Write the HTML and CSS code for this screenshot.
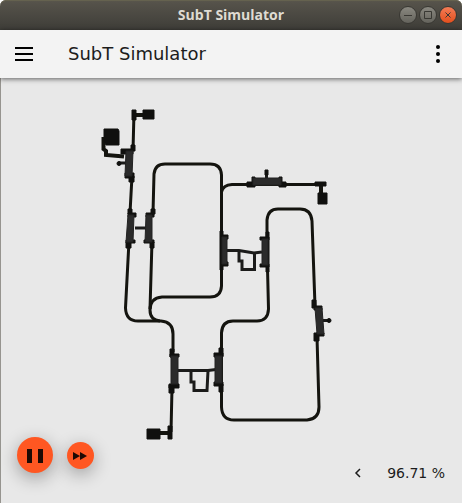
FILE: index.html
```html
<!DOCTYPE html>
<html lang="en">
<head>
<meta charset="utf-8">
<title>SubT Simulator</title>
<link rel="stylesheet" href="styles.css">
</head>
<body>
<div class="window">
  <header class="titlebar">
    <h1 class="window-title">SubT Simulator</h1>
    <div class="window-controls">
      <button class="window-button" aria-label="Minimize"><svg viewBox="0 0 18 18"><path d="M5 9.500h8"/></svg></button>
      <button class="window-button" aria-label="Maximize"><svg viewBox="0 0 18 18"><path d="M5.500 5.500h7v7h-7z"/></svg></button>
      <button class="window-button close" aria-label="Close"><svg viewBox="0 0 18 18"><path d="M6.500 6.500l5 5m0-5l-5 5"/></svg></button>
    </div>
  </header>
  <nav class="toolbar">
    <button class="icon-button" aria-label="Menu"><svg viewBox="0 0 24 24"><path d="M3 5h18v2H3zM3 11h18v2H3zM3 17h18v2H3z"/></svg></button>
    <h2 class="app-title">SubT Simulator</h2>
    <button class="icon-button" aria-label="More"><svg viewBox="0 0 24 24"><circle cx="12" cy="5" r="2"/><circle cx="12" cy="12" r="2"/><circle cx="12" cy="19" r="2"/></svg></button>
  </nav>
  <main class="scene">
    <svg class="map" viewBox="1 78 461 425" role="img" aria-label="Tunnel map">
      <g class="tunnel">
        <path d="M134 112L133 151M132 176L130 213"/>
        <path d="M153 213L154 174Q155 164 165 164H210Q221 164 221.500 175V286Q221 297 210 297H162Q150 298 150 310Q150 320 160 321"/>
        <path d="M129 241L125.500 308Q126 321 138 321H161Q173 322 173 334V352M152 241L150 309M172 388L171 432"/>
        <path d="M221.500 192Q223 185 232 184.500H322"/>
        <path d="M267 238V220Q268 209 278 209H300Q311 209 312 221L315 306"/>
        <path d="M267.500 268L268.500 309Q268 321 257 321H233Q222 321 221.500 333V407Q222 420 234 420H307Q319 419 319 407L317 337"/>
      </g>
      <g class="passage">
        <path d="M103.500 137V149L106 151V155L124 156.500M134 115H145M160 433H170M321 185V195"/>
      </g>
      <g class="link">
        <path d="M119 163H126M135 228H146M227 250.500H239L254 253L262 252M178 370.500H191L208 370.500L216 369.500M266.500 173V178M323 320.500H328"/>
        <path d="M239 251V261H242V269.500H254.500V253M191 371V382H194V390.500H207L208 371"/>
      </g>
      <g class="nub">
        <path d="M132 110h4v10h-4zM143 110h11v9h-11zM104 129h14l1 2v14h-13l-2-4z"/>
        <path d="M131 145h4v6h-4zM121 149h12v5h-12zM125 173h9v5h-9zM129 176h5v6h-5z"/>
        <path d="M128 209h4v5h-4zM128 213h8v4h-8zM126 240h9v3h-9zM126 242h5v6h-5z"/>
        <path d="M151 209h4v5h-4zM146 213h8v4h-8zM144 240h10v3h-10zM150 242h4v6h-4z"/>
        <path d="M220 231h3v39h-3zM221 235h7v4h-7zM221 262h7v4h-7zM266 232h3v40h-3zM260 237h9v3h-9zM260 264h9v3h-9z"/>
        <path d="M247 182h8v5h-8zM252 177h3v6h-3zM279 182h7v5h-7zM279 177h3v6h-3zM265 170h3v5h-3z"/>
        <path d="M315 182h11v4h-11zM318 193h9v11h-9z"/>
        <path d="M312 300h4v8h-4zM314 306h8v4h-8zM316 333h8v3h-8zM314 333h5v8h-5z"/>
        <path d="M170 349h4v8h-4zM170 354h9v3h-9zM169 384h10v4h-10zM169 385h5v8h-5z"/>
        <path d="M219 348h4v8h-4zM214 353h9v4h-9zM214 382h9v4h-9zM219 384h4v8h-4z"/>
        <path d="M168 426h4v13h-4zM147 429h13v10h-13z"/>
        <circle cx="329" cy="320.500" r="2"/><circle cx="119" cy="163.500" r="2"/>
      </g>
      <g class="station">
        <path d="M126 151h7l-1 25h-7zM128 215h6l-1 27h-7zM146 215h6v27h-7z"/>
        <path d="M222 237h5v27h-5zM262 239h6v26h-6zM253 178h28v7h-28z"/>
        <path d="M315 308h7l2 26h-7zM171 356h7v28h-7zM215 356h7v27h-7z"/>
      </g>
    </svg>
    <footer class="controls">
      <div class="playback">
        <button class="fab" aria-label="Pause"><svg viewBox="0 0 36 36"><path d="M10 12h5v14h-5zM21 12h5v14h-5z"/></svg></button>
        <button class="fab small" aria-label="Fast forward"><svg viewBox="0 0 27 27"><path d="M6 10l7 4-7 4zM13 10l7 4-7 4z"/></svg></button>
      </div>
      <div class="status">
        <button class="previous" aria-label="Show statistics"><svg viewBox="0 0 8 10"><path d="M6 1L2 5l4 4"/></svg></button>
        <output>96.71 %</output>
      </div>
    </footer>
  </main>
</div>
</body>
</html>
```

FILE: styles.css
```css
* {
  box-sizing: border-box;
}

body {
  margin: 0;
  background: #fff;
  color: #1c1c1c;
  font-family: "DejaVu Sans", sans-serif;
}

button {
  display: grid;
  place-items: center;
  padding: 0;
  border: 0;
  background: none;
  color: inherit;
}

.window {
  display: flex;
  flex-direction: column;
  min-height: 100vh;
}

.titlebar {
  display: grid;
  grid-template-columns: 1fr auto 1fr;
  align-items: center;
  height: 30px;
  padding: 0 5px;
  border-radius: 6px 6px 0 0;
  background: linear-gradient(#5a574c, #55524a 10%, #3e3d38);
  box-shadow: inset 0 1px #65624f;
}

.window-title {
  grid-column: 2;
  margin: 0;
  color: #dfdbd2;
  font: bold 14px/20px "Open Sans", sans-serif;
}

.window-controls {
  display: flex;
  justify-content: flex-end;
  gap: 2px;
}

.window-button {
  width: 18px;
  height: 18px;
  border: 1px solid #393833;
  border-radius: 50%;
  background: linear-gradient(#8a8880, #64635c);
}

.window-button.close {
  background: linear-gradient(#f37c56, #e34f1d);
}

.window-button svg {
  width: 18px;
  height: 18px;
  margin: -1px;
  fill: none;
  stroke: #393833;
}

.toolbar {
  position: relative;
  z-index: 1;
  display: flex;
  align-items: center;
  height: 48px;
  padding: 0 12px;
  background: #f3f3f3;
  box-shadow: 0 1px 5px #0009;
}

.icon-button,
.icon-button svg {
  width: 24px;
  height: 24px;
}

.app-title {
  flex: 1;
  margin: 0 0 0 32px;
  font-size: 18px;
  font-weight: normal;
  line-height: 24px;
}

.scene {
  position: relative;
  display: flex;
  flex: 1;
  align-items: flex-end;
  border-left: 1px solid #96948f;
  background: #e8e8e8;
}

.map {
  position: absolute;
  inset: 0;
  width: 100%;
  height: 100%;
}

.tunnel,
.passage,
.link {
  fill: none;
  stroke: #14140f;
  stroke-width: 3;
}

.passage {
  stroke-width: 4;
}

.link {
  stroke: #1b1b1a;
}

.nub {
  fill: #10100e;
  stroke: #10100e;
}

.station {
  fill: #2b2b2b;
  stroke: #222;
}

.controls {
  position: relative;
  display: flex;
  flex: 1;
  align-items: flex-end;
  justify-content: space-between;
  padding: 0 17px 20px 16px;
}

.playback,
.status {
  display: flex;
  align-items: center;
}

.playback {
  gap: 14px;
  padding-bottom: 10px;
}

.status {
  gap: 25px;
  font-size: 14px;
  line-height: 20px;
}

.fab {
  width: 36px;
  height: 36px;
  border-radius: 50%;
  background: #ff5722;
  box-shadow: 0 5px 18px #0005;
}

.fab.small,
.fab.small svg {
  width: 27px;
  height: 27px;
}

.fab svg {
  width: 36px;
  height: 36px;
  fill: #1e0a04;
}

.previous svg {
  width: 8px;
  height: 10px;
  fill: none;
  stroke: #1c1c1c;
  stroke-width: 1.5;
}
```
